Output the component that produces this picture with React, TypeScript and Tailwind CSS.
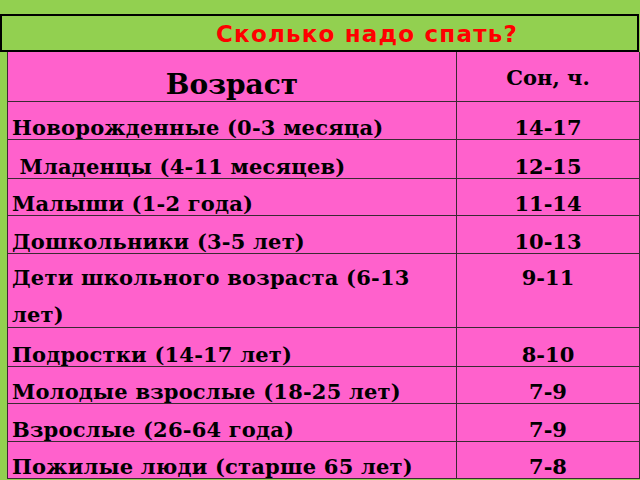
const serif = "font-['DejaVu_Serif',serif] font-bold text-black";

type Row = { age: string; sleep: string; h: string };

const rows: Row[] = [
  { age: "Новорожденные (0-3 месяца)", sleep: "14-17", h: "h-[38px]" },
  { age: "\u00a0Младенцы (4-11 месяцев)", sleep: "12-15", h: "h-[39px]" },
  { age: "Малыши (1-2 года)", sleep: "11-14", h: "h-[37px]" },
  { age: "Дошкольники (3-5 лет)", sleep: "10-13", h: "h-[38px]" },
];

const rowsAfter: Row[] = [
  { age: "Подростки (14-17 лет)", sleep: "8-10", h: "h-[39px]" },
  { age: "Молодые взрослые (18-25 лет)", sleep: "7-9", h: "h-[37px]" },
  { age: "Взрослые (26-64 года)", sleep: "7-9", h: "h-[38px]" },
  { age: "Пожилые люди (старше 65 лет)", sleep: "7-8", h: "h-[37px]" },
];

function TableRow({ row }: { row: Row }) {
  return (
    <div className={`flex border-b border-[#3a2a33] ${row.h}`}>
      <div className="flex w-[449px] shrink-0 items-end border-r border-[#3a2a33] pb-[1px] pl-[4px]">
        <span className="whitespace-pre text-[21px] leading-[21px] tracking-[0.2px]">{row.age}</span>
      </div>
      <div className="flex flex-1 items-end justify-center pb-[1px]">
        <span className="text-[21px] leading-[21px]">{row.sleep}</span>
      </div>
    </div>
  );
}

export default function App() {
  return (
    <div className="h-[480px] w-[640px] overflow-hidden bg-[#92d050] pt-[14px]">
      <div className="flex h-[38px] w-[639px] items-center border-2 border-black pl-[214px] pt-[3px]">
        <span className="font-['DejaVu_Sans',sans-serif] text-[23px] font-bold leading-[23px] tracking-[1.2px] text-[#ff0000]">
          Сколько надо спать?
        </span>
      </div>
      <div className={`ml-[7px] w-[633px] border-x border-[#3a2a33] bg-[#ff61cc] ${serif}`}>
        <div className="flex h-[50px] border-b border-[#3a2a33]">
          <div className="flex w-[449px] shrink-0 items-end justify-center border-r border-[#3a2a33] pb-[2px]">
            <span className="text-[28px] leading-[28px]">Возраст</span>
          </div>
          <div className="flex flex-1 items-start justify-center pt-[15px]">
            <span className="text-[21px] leading-[21px]">Сон, ч.</span>
          </div>
        </div>
        {rows.map((r) => (
          <TableRow key={r.age} row={r} />
        ))}
        <div className="flex h-[74px] border-b border-[#3a2a33]">
          <div className="w-[449px] shrink-0 border-r border-[#3a2a33] pl-[4px] pt-[5px]">
            <span className="text-[21px] leading-[37px] tracking-[0.2px]">
              Дети школьного возраста (6-13
              <br />
              лет)
            </span>
          </div>
          <div className="flex flex-1 items-start justify-center pt-[5px]">
            <span className="text-[21px] leading-[37px]">9-11</span>
          </div>
        </div>
        {rowsAfter.map((r) => (
          <TableRow key={r.age} row={r} />
        ))}
      </div>
    </div>
  );
}
